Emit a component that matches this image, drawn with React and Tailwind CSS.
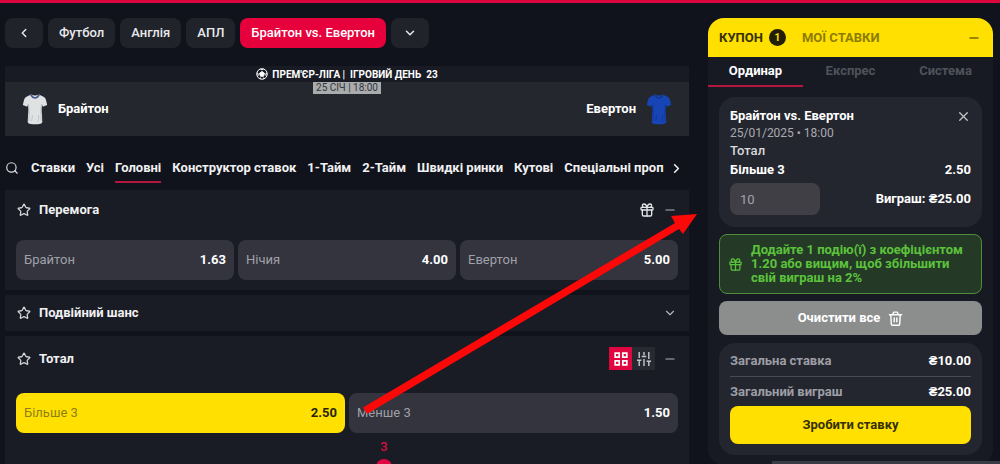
import { ChevronLeft, ChevronDown, ChevronRight, Search, Star, Gift, Minus, X } from "lucide-react";
import { useState } from "react";

const crumbs = ["Футбол", "Англія", "АПЛ"];
const tabs = ["Ставки", "Усі", "Головні", "Конструктор ставок", "1-Тайм", "2-Тайм", "Швидкі ринки", "Кутові", "Спеціальні проп"];

function Shirt({ body, shade, collar }) {
  return (
    <svg viewBox="0 0 26 32" className="h-8 w-[26px] shrink-0" aria-hidden="true">
      <path d="M9 1.500 4 4Q2.500 5 2 7L.8 12l4.400 1.700L6.200 11Q7 17 6 22l-.3 7q.3 1.500 1.800 1.800 5.500 1 11 0 1.500-.3 1.800-1.800l-.3-7q-1-5-.2-11l1 2.700 4.400-1.700L24 7q-.5-2-2-3l-5-2.500Q13 3.500 9 1.500Z" fill={body} />
      <path d="M6.700 12q1 8 0 16M19.300 12q-1 8 0 16M9.500 28q1-3 .8-6M16 29q1-4 .5-7" fill="none" stroke={shade} strokeWidth="1" />
      <path d="M8.700 1.700Q10 4.500 13 5q3-.5 4.300-3.300" fill="none" stroke={collar} strokeWidth="1.600" />
    </svg>
  );
}

function Ball() {
  return (
    <svg viewBox="0 0 24 24" className="size-3 shrink-0" fill="none" stroke="#fff" strokeWidth="2" aria-hidden="true">
      <circle cx="12" cy="12" r="10.500" />
      <path d="m12 7 5 3.700-2 5.800H9l-2-5.800z" fill="#fff" />
      <path d="M9 1.500 12 4l3-2.500M22 10l-2.500 1.500.5 4M17 20.500l-3-.5M7 20.500l3-.5M2 10l2.500 1.500-.5 4" />
    </svg>
  );
}

function GridIcon() {
  return (
    <svg viewBox="0 0 14 14" className="size-3.5" fill="none" stroke="#fff" strokeWidth="1.700" aria-hidden="true">
      <path d="M1.200 1.200h4v4h-4zM8.800 1.200h4v4h-4zM1.200 8.800h4v4h-4zM8.800 8.800h4v4h-4z" />
    </svg>
  );
}

function SlidersIcon() {
  return (
    <svg viewBox="0 0 14 14" className="size-3.5" fill="none" stroke="#c6c7cb" strokeWidth="1.400" aria-hidden="true">
      <path d="M2.200 0v6M0 8.300h4.400M2.200 8.300V14M7 0v3.200M4.800 4.500h4.400M7 7v7M11.800 0v7M9.600 9.200H14M11.800 9.200V14" />
    </svg>
  );
}

function TrashIcon() {
  return (
    <svg viewBox="0 0 16 16" className="size-[15px]" fill="none" stroke="currentColor" strokeWidth="1.500" strokeLinecap="round" strokeLinejoin="round" aria-hidden="true">
      <path d="M1.500 4h13M5 4l1-2.800h4L11 4M3 4l.5 10q.1 1.200 1.200 1.200h6.600q1.100 0 1.200-1.200L13 4M6.600 7.500v4M9.400 7.500v4" />
    </svg>
  );
}

function MarketHeader({ title, children }) {
  return (
    <div className="flex items-center gap-2 px-3">
      <button aria-label={"До обраного: " + title} className="shrink-0 text-[#d5d6d9]">
        <Star size={14} strokeWidth={2.200} />
      </button>
      <h2 className="flex-1 leading-5 font-bold text-[#f0f0f2]">{title}</h2>
      <div className="flex items-center gap-2 text-[#b4b5ba]">{children}</div>
    </div>
  );
}

function Odd({ label, value, active }) {
  return (
    <button
      aria-pressed={!!active}
      className={
        "flex h-10 flex-1 items-center justify-between rounded-lg px-2 " +
        (active ? "bg-[#ffe000] text-[#2a2508]" : "bg-[#33343e] text-white")
      }
    >
      <span className={active ? "text-[#8f7f14]" : "text-[#a0a1a8]"}>{label}</span>
      <span className="font-bold">{value}</span>
    </button>
  );
}

function Main() {
  return (
    <main className="min-w-0 flex-1">
      <nav aria-label="Розділи" className="flex h-[30px] gap-[5px] font-medium text-[#e8e9eb]">
        <button aria-label="Назад" className="flex w-[38px] items-center justify-center rounded-lg bg-[#20232a]">
          <ChevronLeft size={14} strokeWidth={2.500} />
        </button>
        {crumbs.map((c) => (
          <a key={c} href="#" className="flex items-center rounded-lg bg-[#20232a] px-[11px]">{c}</a>
        ))}
        <a href="#" aria-current="page" className="flex items-center rounded-lg bg-[#e6003c] px-[11px] text-white">Брайтон vs. Евертон</a>
        <button aria-label="Інші матчі" className="flex w-[38px] items-center justify-center rounded-lg bg-[#20232a]">
          <ChevronDown size={14} strokeWidth={2.500} />
        </button>
      </nav>

      <section className="mt-[18px]">
        <div className="flex h-4 items-center justify-center gap-1 bg-[#181b24] text-[10px] font-bold text-white">
          <Ball />
          <span className="whitespace-pre">ПРЕМ'ЄР-ЛІГА |  ІГРОВИЙ ДЕНЬ  23</span>
        </div>
        <div className="flex h-[54px] items-start justify-between bg-[#24272e] px-[17px] font-bold text-white">
          <div className="flex flex-1 items-center gap-2.5 pt-[11px]">
            <Shirt body="#dfe1e3" shade="#c3c6ca" collar="#40558f" />
            Брайтон
          </div>
          <time className="bg-[#a9abad] px-[3px] text-[10px] leading-3 font-normal text-[#33363b]">25 СІЧ | 18:00</time>
          <div className="flex flex-1 items-center justify-end gap-2.5 pt-[11px]">
            Евертон
            <Shirt body="#1745b5" shade="#11389a" collar="#12388f" />
          </div>
        </div>
      </section>

      <div className="mt-[18px] flex h-9 items-start font-bold text-[#f0f0f2]">
        <button aria-label="Пошук" className="mr-3 flex h-7 items-center text-[#dcdde0]">
          <Search size={14} strokeWidth={2} />
        </button>
        <nav aria-label="Ринки" className="flex min-w-0 flex-1 gap-[11px] overflow-hidden whitespace-nowrap">
          {tabs.map((t) => (
            <a key={t} href="#" className={"flex h-[29px] shrink-0 items-center border-b-2 " + (t === "Головні" ? "border-[#b3173f]" : "border-transparent")}>{t}</a>
          ))}
        </nav>
        <button aria-label="Далі" className="flex h-7 w-[25px] items-center justify-center">
          <ChevronRight size={15} strokeWidth={2.500} />
        </button>
      </div>

      <div className="flex flex-col gap-[5px]">
        <section className="bg-[#191b25] py-2.5">
          <MarketHeader title="Перемога">
            <Gift size={16} strokeWidth={2} className="text-[#e4e5e7]" />
            <button aria-label="Згорнути"><Minus size={14} strokeWidth={2} /></button>
          </MarketHeader>
          <div className="mt-5 flex gap-1 px-[11px]">
            <Odd label="Брайтон" value="1.63" />
            <Odd label="Нічия" value="4.00" />
            <Odd label="Евертон" value="5.00" />
          </div>
        </section>
        <section className="bg-[#191b25] py-2">
          <MarketHeader title="Подвійний шанс">
            <button aria-label="Розгорнути"><ChevronDown size={14} strokeWidth={2} /></button>
          </MarketHeader>
        </section>
        <section className="h-40 bg-[#191b25] pt-[11px]">
          <MarketHeader title="Тотал">
            <div className="flex">
              <button aria-label="Сітка" className="flex size-[23px] items-center justify-center bg-[#e0063f]"><GridIcon /></button>
              <button aria-label="Повзунок" className="flex size-[23px] items-center justify-center bg-[#282a32]"><SlidersIcon /></button>
            </div>
            <button aria-label="Згорнути"><Minus size={14} strokeWidth={2} /></button>
          </MarketHeader>
          <div className="mt-[23px] flex gap-1 px-[11px]">
            <Odd label="Більше 3" value="2.50" active />
            <Odd label="Менше 3" value="1.50" />
          </div>
          <div className="mt-1 flex flex-col items-center pl-[74px] leading-5 font-medium text-[#d5103f]">
            3
            <span className="mt-0.5 size-4 rounded-full bg-[#e0063f]" />
          </div>
        </section>
      </div>
    </main>
  );
}

function Coupon() {
  const [stake, setStake] = useState("10");
  return (
    <aside className="w-[285px] shrink-0 rounded-2xl bg-[#171a23] pb-2.5">
      <header className="flex h-[39px] items-center rounded-t-2xl bg-[#ffe000] pr-3 pl-[11px] font-bold">
        <button className="flex items-center gap-1.5 text-[#352f05]">
          КУПОН
          <span className="flex size-[17px] items-center justify-center rounded-full bg-[#231f06] text-[10px] text-[#ffe000]">1</span>
        </button>
        <button className="ml-4 flex-1 text-left text-[#8c7c05]">МОЇ СТАВКИ</button>
        <button aria-label="Згорнути купон" className="text-[#352f05]"><Minus size={14} strokeWidth={2} /></button>
      </header>
      <nav aria-label="Тип ставки" className="grid h-[29px] grid-cols-3 text-center leading-7 font-bold text-[#4f525a]">
        <a href="#" className="border-b-2 border-[#b3173f] text-white">Ординар</a>
        <a href="#">Експрес</a>
        <a href="#">Система</a>
      </nav>

      <div className="flex flex-col px-[11px] pt-[11px]">
        <section className="rounded-2xl bg-[#24262f] px-[11px] pt-2.5 pb-3 text-white">
          <div className="flex items-center justify-between">
            <h2 className="leading-[18px] font-bold">Брайтон vs. Евертон</h2>
            <button aria-label="Видалити" className="text-[#c6c7cb]"><X size={15} strokeWidth={2} /></button>
          </div>
          <p className="text-xs leading-[17px] text-[#a9abb0]">25/01/2025 • 18:00</p>
          <p className="leading-[18px] font-medium text-[#d8d9dc]">Тотал</p>
          <p className="flex justify-between leading-5 font-bold"><span>Більше 3</span><span>2.50</span></p>
          <div className="mt-[3px] flex items-center justify-between">
            <input aria-label="Сума ставки" value={stake} onChange={(e) => setStake(e.target.value)} className="h-8 w-[90px] rounded-lg bg-[#403f45] px-2.5 text-[#a3a3a8]" />
            <span className="font-bold">Виграш: ₴25.00</span>
          </div>
        </section>

        <p className="mt-[7px] flex items-center gap-2 rounded-lg border border-[#4f8f3c] bg-[#243a27] px-2 py-2 leading-[14px] font-bold text-[#5cc23c]">
          <Gift size={15} strokeWidth={2} className="shrink-0" />
          Додайте 1 подію(ї) з коефіцієнтом 1.20 або вищим, щоб збільшити свій виграш на 2%
        </p>

        <button className="mt-[7px] flex h-[34px] items-center justify-center gap-2 rounded-lg bg-[#8c8d8d] font-bold text-white">
          Очистити все
          <TrashIcon />
        </button>

        <section className="mt-2 rounded-2xl bg-[#24262f] px-[11px] pt-0.5 pb-[11px] font-bold">
          <dl>
            <div className="flex h-8 items-center justify-between border-b border-[#494b54]">
              <dt className="text-[#9d9ea5]">Загальна ставка</dt><dd className="text-white">₴10.00</dd>
            </div>
            <div className="flex h-[29px] items-center justify-between">
              <dt className="text-[#9d9ea5]">Загальний виграш</dt><dd className="text-white">₴25.00</dd>
            </div>
          </dl>
          <button className="h-[38px] w-full rounded-lg bg-[#ffe000] text-[#352f05]">Зробити ставку</button>
        </section>
      </div>
    </aside>
  );
}

export default function App() {
  return (
    <div className="relative h-screen overflow-hidden border-t-3 border-[#dc063e] bg-[#10131b] font-['Roboto','Liberation_Sans',sans-serif] text-[13px]">
      <div className="flex items-start gap-[19px] pt-[15px] pr-[7px] pl-[5px]">
        <Main />
        <Coupon />
      </div>
      <svg viewBox="0 0 334 200" className="pointer-events-none absolute top-[210px] left-[363px] h-[200px] w-[334px]" aria-hidden="true">
        <path d="M0 194.500 312 10 308 3 334 1 320 21 316 16 4 201Z" fill="#fb0808" />
      </svg>
      <div className="absolute right-0 bottom-0 h-[3px] w-[228px] bg-[#383b43]" />
    </div>
  );
}
